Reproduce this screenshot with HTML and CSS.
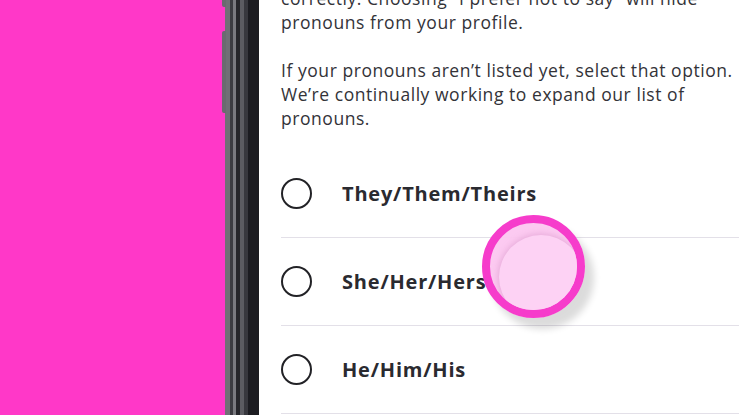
FILE: index.html
```html
<!DOCTYPE html>
<html lang="en">
<head>
    <meta charset="UTF-8">
    <meta name="viewport" content="width=device-width, initial-scale=1.0">
    <title>Pronouns</title>
    <link rel="stylesheet" href="styles.css">
</head>
<body>
    <div class="backdrop"></div>
    <div class="phone-frame">
        <span class="side-button top"></span>
        <span class="side-button volume"></span>
    </div>
    <div class="screen">
        <div class="content">
            <p class="hint">correctly. Choosing &ldquo;I prefer not to say&rdquo; will hide pronouns from your profile.</p>
            <p class="hint">If your pronouns aren&rsquo;t listed yet, select that option. We&rsquo;re continually working to expand our list of pronouns.</p>

            <ul class="options">
                <li class="option"><span class="radio"></span><span class="label">They/Them/Theirs</span></li>
                <li class="option"><span class="radio"></span><span class="label">She/Her/Hers</span></li>
                <li class="option"><span class="radio"></span><span class="label">He/Him/His</span></li>
            </ul>
        </div>
    </div>
    <div class="touch"><span class="touch-inner"></span></div>
</body>
</html>
```

FILE: styles.css
```css
body {
    margin: 0;
    height: 415px;
    display: flex;
    overflow: hidden;
    font-family: "Open Sans", Lato, sans-serif;
    background-color: #ff38c8;
}
.backdrop {
    width: 225px;
    flex-shrink: 0;
}
.phone-frame {
    position: relative;
    width: 34px;
    flex-shrink: 0;
    background: linear-gradient(to right,
        #707076 0, #707076 5px,
        #3c3c42 5px, #3c3c42 8px,
        #7a7a80 8px, #7a7a80 11px,
        #26262b 11px, #26262b 15px,
        #5c5c62 15px, #5c5c62 19px,
        #38383e 19px, #38383e 23px,
        #1c1c21 23px);
}
.side-button {
    position: absolute;
    left: -3px;
    width: 4px;
    background-color: #6a6a70;
    border-radius: 2px 0 0 2px;
}
.side-button.top {
    top: -4px;
    height: 11px;
}
.side-button.volume {
    top: 31px;
    height: 82px;
}
.screen {
    flex: 1;
    background-color: #fff;
    overflow: hidden;
}
.content {
    margin-top: -14px;
    padding-left: 22px;
    width: 500px;
}
.hint {
    margin: 0 0 24px;
    font-size: 17.5px;
    letter-spacing: 0.55px;
    line-height: 24px;
    color: #333338;
    width: 458px;
}
.options {
    list-style: none;
    margin: 0;
    padding: 0;
    margin-top: -4px;
}
.option {
    display: flex;
    align-items: center;
    height: 87px;
    border-bottom: 1.5px solid #e3e0e8;
}
.radio {
    width: 27px;
    height: 27px;
    border: 2.5px solid #222226;
    border-radius: 50%;
    flex-shrink: 0;
}
.label {
    margin-left: 30px;
    font-size: 20px;
    letter-spacing: 0.8px;
    font-weight: 700;
    color: #2a2a30;
}

/* tap indicator over the list */
.touch {
    position: absolute;
    left: 482px;
    top: 215px;
    width: 87px;
    height: 87px;
    border: 8px solid #f63ccb;
    border-radius: 50%;
    overflow: hidden;
    background-color: rgba(252, 200, 240, 0.96);
    box-shadow: 9px 11px 7px rgba(0, 0, 0, 0.14);
}
.touch-inner {
    position: absolute;
    left: 9px;
    top: 12px;
    width: 84px;
    height: 84px;
    border-radius: 50%;
    background-color: #fdd2f4;
    box-shadow: 0 0 6px 1px rgba(190, 110, 170, 0.35);
}
```
